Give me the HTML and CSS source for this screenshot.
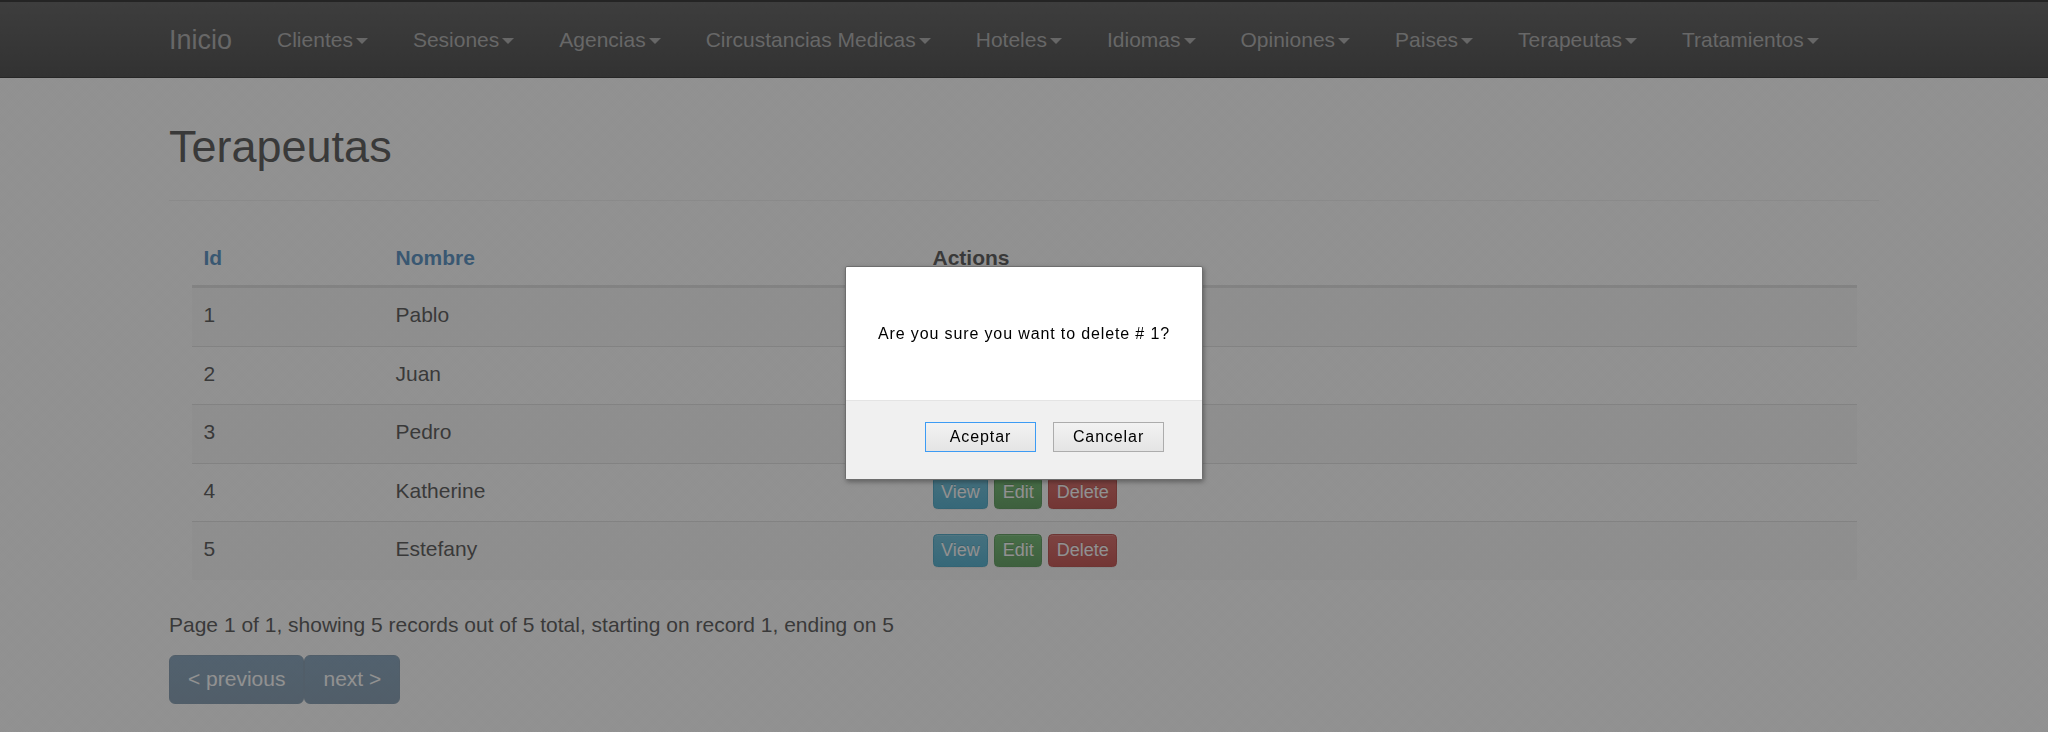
FILE: index.html
```html
<!DOCTYPE html>
<html lang="es">
<head>
<meta charset="utf-8">
<title>Terapeutas</title>
<link rel="stylesheet" href="styles.css">
</head>
<body>
<nav class="navbar">
  <div class="container nav-inner">
    <a class="brand" href="#">Inicio</a>
    <ul class="nav">
      <li><a href="#">Clientes<span class="caret"></span></a></li>
      <li><a href="#">Sesiones<span class="caret"></span></a></li>
      <li><a href="#">Agencias<span class="caret"></span></a></li>
      <li><a href="#">Circustancias Medicas<span class="caret"></span></a></li>
      <li><a href="#">Hoteles<span class="caret"></span></a></li>
      <li><a href="#">Idiomas<span class="caret"></span></a></li>
      <li><a href="#">Opiniones<span class="caret"></span></a></li>
      <li><a href="#">Paises<span class="caret"></span></a></li>
      <li><a href="#">Terapeutas<span class="caret"></span></a></li>
      <li><a href="#">Tratamientos<span class="caret"></span></a></li>
    </ul>
  </div>
</nav>

<main class="container">
  <div class="page-header"><h2>Terapeutas</h2></div>
  <div class="table-wrap">
    <table class="table">
      <thead>
        <tr>
          <th class="col-id"><a href="#">Id</a></th>
          <th class="col-name"><a href="#">Nombre</a></th>
          <th class="col-actions">Actions</th>
        </tr>
      </thead>
      <tbody>
        <tr><td>1</td><td>Pablo</td><td><div class="actions"><a class="btn btn-info">View</a><a class="btn btn-success">Edit</a><a class="btn btn-danger">Delete</a></div></td></tr>
        <tr><td>2</td><td>Juan</td><td><div class="actions"><a class="btn btn-info">View</a><a class="btn btn-success">Edit</a><a class="btn btn-danger">Delete</a></div></td></tr>
        <tr><td>3</td><td>Pedro</td><td><div class="actions"><a class="btn btn-info">View</a><a class="btn btn-success">Edit</a><a class="btn btn-danger">Delete</a></div></td></tr>
        <tr><td>4</td><td>Katherine</td><td><div class="actions"><a class="btn btn-info">View</a><a class="btn btn-success">Edit</a><a class="btn btn-danger">Delete</a></div></td></tr>
        <tr><td>5</td><td>Estefany</td><td><div class="actions"><a class="btn btn-info">View</a><a class="btn btn-success">Edit</a><a class="btn btn-danger">Delete</a></div></td></tr>
      </tbody>
    </table>
  </div>
  <p class="paging-info">Page 1 of 1, showing 5 records out of 5 total, starting on record 1, ending on 5</p>
  <div class="pager">
    <a class="page-btn">&lt; previous</a><a class="page-btn">next &gt;</a>
  </div>
</main>

<div class="backdrop"></div>

<div class="dialog">
  <div class="dialog-body">Are you sure you want to delete # 1?</div>
  <div class="dialog-footer">
    <button class="dlg-btn dlg-default">Aceptar</button>
    <button class="dlg-btn">Cancelar</button>
  </div>
</div>
</body>
</html>
```

FILE: styles.css
```css
* {
  box-sizing: border-box;
}

html, body {
  margin: 0;
  padding: 0;
}

body {
  background: #fff;
  color: #333;
  font-family: "Liberation Sans", Arial, Helvetica, sans-serif;
  font-size: 21px;
  line-height: 30px;
}

a {
  color: #337ab7;
  text-decoration: none;
}

.container {
  width: 1755px;
  margin: 0 auto;
  padding: 0 22.5px;
}

/* ---------- navbar ---------- */
.navbar {
  height: 78px;
  border-top: 2px solid #000;
  border-bottom: 1px solid #080808;
  background-image: linear-gradient(to bottom, #3c3c3c 0, #222 100%);
}

.nav-inner {
  display: flex;
  align-items: flex-start;
}

.brand {
  margin-left: -22.5px;
  padding: 22.5px;
  height: 75px;
  font-size: 27px;
  line-height: 30px;
  color: #9d9d9d;
}

.nav {
  display: flex;
  margin: 0;
  padding: 0;
  list-style: none;
}

.nav a {
  display: block;
  padding: 22.5px;
  line-height: 30px;
  color: #9d9d9d;
}

.caret {
  display: inline-block;
  width: 0;
  height: 0;
  margin-left: 3px;
  vertical-align: middle;
  border-top: 6px solid;
  border-left: 6px solid transparent;
  border-right: 6px solid transparent;
}

/* ---------- page header ---------- */
.page-header {
  margin: 44px 0 30px;
  padding-bottom: 13.5px;
  border-bottom: 1px solid #eee;
}

.page-header h2 {
  margin: 0 0 15px;
  font-size: 45px;
  font-weight: 500;
  line-height: 49.5px;
  color: #333;
}

/* ---------- table ---------- */
.table-wrap {
  padding: 0 22.5px;
}

.table {
  width: 100%;
  border-collapse: collapse;
  border-spacing: 0;
  margin-bottom: 30px;
}

.table th {
  text-align: left;
  font-weight: bold;
  padding: 12px;
  line-height: 30px;
  vertical-align: bottom;
  border-bottom: 3px solid #ddd;
}

.col-id { width: 192px; }
.col-name { width: 537px; }

.table td {
  padding: 12.25px 12px;
  line-height: 30px;
  vertical-align: top;
  border-top: 1px solid #ddd;
}

.table tbody tr:nth-child(odd) {
  background: #f9f9f9;
}

.actions {
  display: flex;
  gap: 6px;
}

.btn {
  display: inline-block;
  padding: 2px 7.5px;
  font-size: 18px;
  line-height: 27px;
  border: 1px solid transparent;
  border-radius: 4.5px;
  color: #fff;
  text-shadow: 0 -1px 0 rgba(0, 0, 0, 0.2);
  box-shadow: inset 0 1px 0 rgba(255, 255, 255, 0.15), 0 1px 1px rgba(0, 0, 0, 0.075);
}

.btn-info {
  background-image: linear-gradient(to bottom, #4fb3d3 0, #2a9fc6 100%);
  border-color: #2596bb;
}

.btn-success {
  background-image: linear-gradient(to bottom, #52ad52 0, #3d8c3d 100%);
  border-color: #3a863a;
}

.btn-danger {
  background-image: linear-gradient(to bottom, #d14a46 0, #b92b27 100%);
  border-color: #ad2925;
}

/* ---------- paging ---------- */
.paging-info {
  margin: 0 0 15px;
}

.pager {
  display: flex;
}

.page-btn {
  display: block;
  padding: 8.5px 18px;
  line-height: 30px;
  color: #fff;
  background-image: linear-gradient(to bottom, #1f5584 0, #1b4970 100%);
  border: 1px solid #1d4a70;
  border-radius: 6px;
  opacity: 0.65;
}

/* ---------- overlay + dialog ---------- */
.backdrop {
  position: fixed;
  inset: 0;
  background-color: rgba(63, 63, 63, 0.57);
  background-image:
    repeating-linear-gradient(45deg, rgba(0, 0, 0, 0.012) 0 1px, transparent 1px 2px),
    repeating-linear-gradient(-45deg, rgba(0, 0, 0, 0.012) 0 1px, transparent 1px 2px);
}

.dialog {
  position: fixed;
  top: 266px;
  left: 50%;
  transform: translateX(-50%);
  width: 358px;
  height: 214px;
  display: flex;
  flex-direction: column;
  background: #fff;
  border: 1px solid #6e6e6e;
  border-radius: 2px;
  box-shadow: 1px 2px 5px rgba(0, 0, 0, 0.35);
  color: #000;
  font-family: "Liberation Sans", Arial, sans-serif;
  font-size: 16px;
  line-height: 20px;
  overflow: hidden;
}

.dialog-body {
  height: 133px;
  display: flex;
  align-items: center;
  justify-content: center;
  letter-spacing: 0.87px;
}

.dialog-footer {
  flex: 1;
  display: flex;
  justify-content: flex-end;
  align-items: flex-start;
  gap: 17px;
  padding: 21px 38px 0 0;
  background: #f0f0f0;
  border-top: 1px solid #e4e4e4;
}

.dlg-btn {
  width: 111px;
  height: 30px;
  padding: 0;
  font-family: inherit;
  font-size: 16px;
  letter-spacing: 0.9px;
  color: #000;
  background-image: linear-gradient(to bottom, #f2f2f2 0, #e4e4e4 100%);
  border: 1px solid #acacac;
  border-radius: 0;
}

.dlg-default {
  border-color: #3c9bf4;
}
```
